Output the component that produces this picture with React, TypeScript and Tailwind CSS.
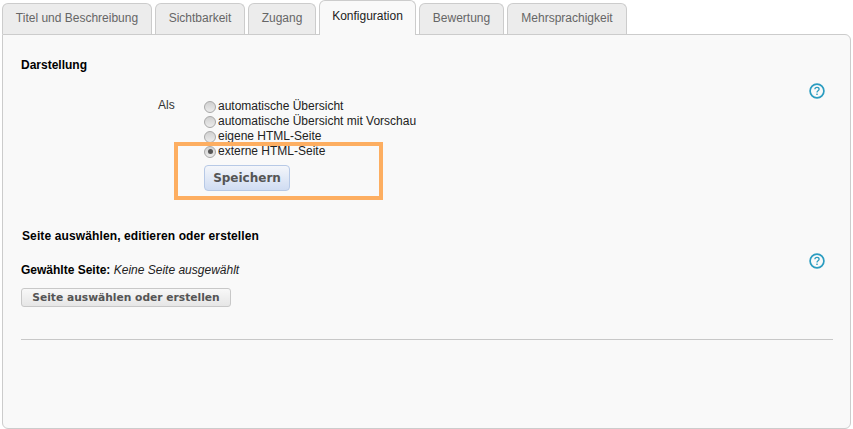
import React from "react";

const tabs = [
  { label: "Titel und Beschreibung", width: "w-[150px]" },
  { label: "Sichtbarkeit", width: "w-[90px]" },
  { label: "Zugang", width: "w-[68px]" },
  { label: "Konfiguration", width: "w-[97px]", active: true },
  { label: "Bewertung", width: "w-[85px]" },
  { label: "Mehrsprachigkeit", width: "w-[120px]" },
];

const options = [
  { label: "automatische Übersicht" },
  { label: "automatische Übersicht mit Vorschau" },
  { label: "eigene HTML-Seite" },
  { label: "externe HTML-Seite", checked: true },
];

function HelpIcon() {
  return (
    <svg width="16" height="16" viewBox="0 0 16 16" fill="none">
      <circle cx="8" cy="8" r="6.9" stroke="#2a9cc0" strokeWidth="1.7" />
      <path
        d="M5.9 6.3c0-1.2 1-1.9 2.1-1.9s2.1.7 2.1 1.8c0 1.6-2.1 1.6-2.1 3.2"
        stroke="#2a9cc0"
        strokeWidth="1.3"
      />
      <rect x="7.3" y="10.6" width="1.4" height="1.4" fill="#2a9cc0" />
    </svg>
  );
}

function Radio({ checked }: { checked?: boolean }) {
  return (
    <span className="flex h-[12px] w-[12px] shrink-0 items-center justify-center rounded-full border border-[#a8a8a8] bg-gradient-to-b from-[#d0d0d0] to-[#ececec]">
      {checked && <span className="h-[5px] w-[5px] rounded-full bg-[#555]" />}
    </span>
  );
}

export default function App() {
  return (
    <div className="relative h-[429px] w-[853px] overflow-hidden bg-white font-['Liberation_Sans',Arial,sans-serif] text-[12px] text-black">
      {/* tabs */}
      <div className="relative z-10 ml-[2px] flex h-[34px] items-end gap-[3px]">
        {tabs.map((t) =>
          t.active ? (
            <div
              key={t.label}
              className={`${t.width} -mb-px h-[35px] rounded-t-[6px] border border-b-0 border-[#ccc] bg-[#f9f9f9] pt-[8px] text-center text-[12px] leading-[14px] text-[#222]`}
            >
              {t.label}
            </div>
          ) : (
            <div
              key={t.label}
              className={`${t.width} h-[31px] rounded-t-[6px] border border-b-0 border-[#ccc] bg-[#ececec] pt-[7px] text-center text-[12px] leading-[14px] text-[#666]`}
            >
              {t.label}
            </div>
          ),
        )}
      </div>

      {/* panel */}
      <div className="ml-[2px] flex h-[395px] w-[849px] flex-col rounded-b-[6px] rounded-tr-[6px] border border-[#ccc] bg-[#f9f9f9] pl-[18px] pr-[17px]">
        <div className="mt-[23px] text-[12px] font-bold leading-[14px]">Darstellung</div>

        <div className="mt-[26px] flex items-start">
          <div className="ml-[137px] w-[46px] leading-[14px] text-[#333]">Als</div>
          <div className="flex-1 pt-[1px]">
            {options.map((o) => (
              <label key={o.label} className="flex h-[15px] items-center gap-[2px] leading-[15px] text-[#222]">
                <Radio checked={o.checked} />
                {o.label}
              </label>
            ))}
            <button className="mt-[6px] h-[26px] w-[86px] rounded-[4px] border border-[#b7c9e6] bg-gradient-to-b from-[#f4f6fa] to-[#cfdcf2] font-['DejaVu_Sans',sans-serif] text-[12px] font-bold text-[#555]">
              Speichern
            </button>
          </div>
          <div className="mt-[-15px] pr-[8px]">
            <HelpIcon />
          </div>
        </div>

        <div className="ml-[1px] mt-[38px] text-[12px] font-bold leading-[14px] tracking-[0.12px]">
          Seite auswählen, editieren oder erstellen
        </div>

        <div className="mt-[10px] flex items-start justify-between">
          <div className="mt-[10px] leading-[14px]">
            <span className="font-bold">Gewählte Seite:</span> <em className="text-[#222]">Keine Seite ausgewählt</em>
          </div>
          <div className="mr-[8px]">
            <HelpIcon />
          </div>
        </div>

        <button className="mt-[11px] h-[19px] w-[210px] rounded-[3px] border border-[#c8c8c8] bg-gradient-to-b from-[#f8f8f8] to-[#e6e6e6] font-['DejaVu_Sans',sans-serif] text-[10.7px] font-bold leading-[16px] text-[#555]">
          Seite auswählen oder erstellen
        </button>

        <div className="mt-[32px] h-px bg-[#c8c8c8]" />
      </div>

      {/* highlight annotation */}
      <div className="absolute left-[174px] top-[142px] h-[58px] w-[209px] border-[4px] border-[#fdae61]" />
    </div>
  );
}
